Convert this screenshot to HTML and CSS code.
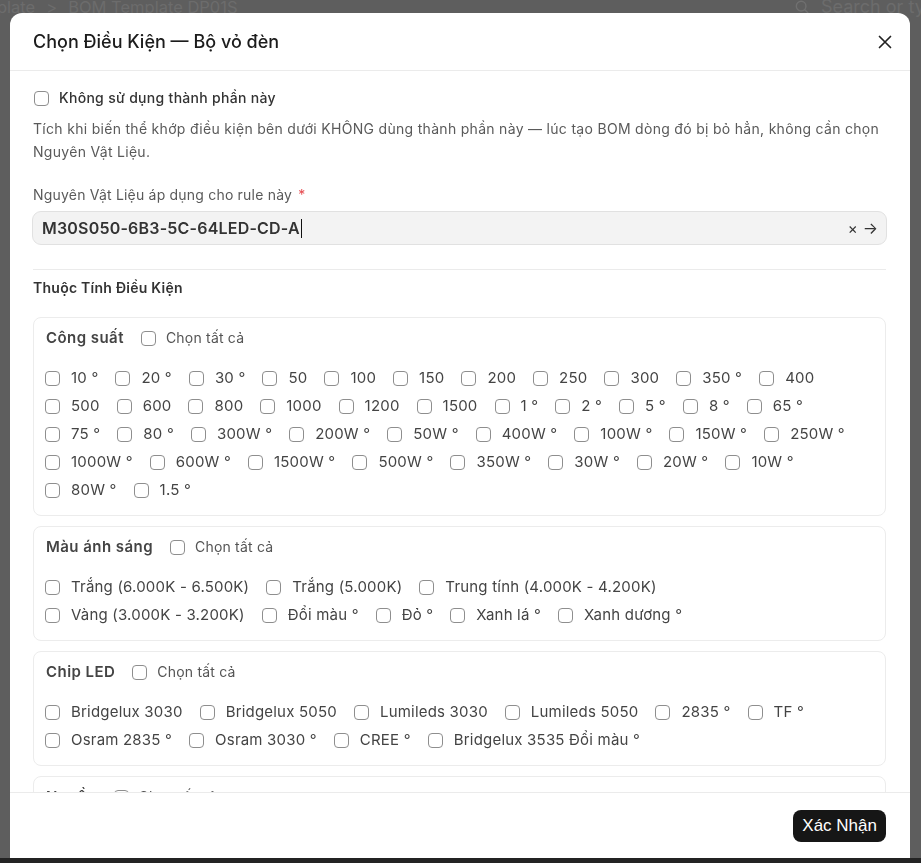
FILE: index.html
```html
<!DOCTYPE html>
<html lang="vi">
<head>
<meta charset="utf-8">
<title>Chọn Điều Kiện</title>
<link rel="stylesheet" href="styles.css">
</head>
<body>
<div class="page">
  <div class="topbar">
    <div class="crumbs"><span>plate</span><span class="sep">&gt;</span><span>BOM Template DP01S</span></div>
    <div class="search">
      <svg width="14" height="14" viewBox="0 0 16 16"><circle cx="7" cy="7" r="5.5" fill="none" stroke="#707070" stroke-width="1.6"/><path d="M11.2 11.2l3.5 3.5" stroke="#707070" stroke-width="1.6" stroke-linecap="round"/></svg>
      <span>Search or type</span>
    </div>
  </div>
</div>

<div class="modal">
  <div class="modal-header">
    <h2 class="modal-title">Chọn Điều Kiện — Bộ vỏ đèn</h2>
    <button class="close-btn" aria-label="Đóng">
      <svg width="16" height="16" viewBox="0 0 16 16"><path d="M2.5 2.5l11 11M13.5 2.5l-11 11" stroke="#222" stroke-width="1.7" stroke-linecap="round"/></svg>
    </button>
  </div>

  <div class="modal-body">
    <label class="check skip"><input type="checkbox"><span>Không sử dụng thành phần này</span></label>
    <p class="desc">Tích khi biến thể khớp điều kiện bên dưới KHÔNG dùng thành phần này — lúc tạo BOM dòng đó bị bỏ hẳn, không cần chọn Nguyên Vật Liệu.</p>

    <div class="field-label">Nguyên Vật Liệu áp dụng cho rule này <span class="req">*</span></div>
    <div class="input">
      <span class="input-value">M30S050-6B3-5C-64LED-CD-A</span><span class="caret"></span>
      <span class="input-actions"><span class="clear">×</span><span class="go">→</span></span>
    </div>

    <div class="divider"></div>
    <div class="section-title">Thuộc Tính Điều Kiện</div>

    <div class="groups">
      <div class="group">
        <div class="group-head">
          <span class="group-title">Công suất</span>
          <label class="check all"><input type="checkbox"><span>Chọn tất cả</span></label>
        </div>
        <div class="items">
          <label class="check item"><input type="checkbox"><span>10 °</span></label>
          <label class="check item"><input type="checkbox"><span>20 °</span></label>
          <label class="check item"><input type="checkbox"><span>30 °</span></label>
          <label class="check item"><input type="checkbox"><span>50</span></label>
          <label class="check item"><input type="checkbox"><span>100</span></label>
          <label class="check item"><input type="checkbox"><span>150</span></label>
          <label class="check item"><input type="checkbox"><span>200</span></label>
          <label class="check item"><input type="checkbox"><span>250</span></label>
          <label class="check item"><input type="checkbox"><span>300</span></label>
          <label class="check item"><input type="checkbox"><span>350 °</span></label>
          <label class="check item"><input type="checkbox"><span>400</span></label>
          <label class="check item"><input type="checkbox"><span>500</span></label>
          <label class="check item"><input type="checkbox"><span>600</span></label>
          <label class="check item"><input type="checkbox"><span>800</span></label>
          <label class="check item"><input type="checkbox"><span>1000</span></label>
          <label class="check item"><input type="checkbox"><span>1200</span></label>
          <label class="check item"><input type="checkbox"><span>1500</span></label>
          <label class="check item"><input type="checkbox"><span>1 °</span></label>
          <label class="check item"><input type="checkbox"><span>2 °</span></label>
          <label class="check item"><input type="checkbox"><span>5 °</span></label>
          <label class="check item"><input type="checkbox"><span>8 °</span></label>
          <label class="check item"><input type="checkbox"><span>65 °</span></label>
          <label class="check item"><input type="checkbox"><span>75 °</span></label>
          <label class="check item"><input type="checkbox"><span>80 °</span></label>
          <label class="check item"><input type="checkbox"><span>300W °</span></label>
          <label class="check item"><input type="checkbox"><span>200W °</span></label>
          <label class="check item"><input type="checkbox"><span>50W °</span></label>
          <label class="check item"><input type="checkbox"><span>400W °</span></label>
          <label class="check item"><input type="checkbox"><span>100W °</span></label>
          <label class="check item"><input type="checkbox"><span>150W °</span></label>
          <label class="check item"><input type="checkbox"><span>250W °</span></label>
          <label class="check item"><input type="checkbox"><span>1000W °</span></label>
          <label class="check item"><input type="checkbox"><span>600W °</span></label>
          <label class="check item"><input type="checkbox"><span>1500W °</span></label>
          <label class="check item"><input type="checkbox"><span>500W °</span></label>
          <label class="check item"><input type="checkbox"><span>350W °</span></label>
          <label class="check item"><input type="checkbox"><span>30W °</span></label>
          <label class="check item"><input type="checkbox"><span>20W °</span></label>
          <label class="check item"><input type="checkbox"><span>10W °</span></label>
          <label class="check item"><input type="checkbox"><span>80W °</span></label>
          <label class="check item"><input type="checkbox"><span>1.5 °</span></label>
        </div>
      </div>

      <div class="group">
        <div class="group-head">
          <span class="group-title">Màu ánh sáng</span>
          <label class="check all"><input type="checkbox"><span>Chọn tất cả</span></label>
        </div>
        <div class="items">
          <label class="check item"><input type="checkbox"><span>Trắng (6.000K - 6.500K)</span></label>
          <label class="check item"><input type="checkbox"><span>Trắng (5.000K)</span></label>
          <label class="check item"><input type="checkbox"><span>Trung tính (4.000K - 4.200K)</span></label>
          <label class="check item"><input type="checkbox"><span>Vàng (3.000K - 3.200K)</span></label>
          <label class="check item"><input type="checkbox"><span>Đổi màu °</span></label>
          <label class="check item"><input type="checkbox"><span>Đỏ °</span></label>
          <label class="check item"><input type="checkbox"><span>Xanh lá °</span></label>
          <label class="check item"><input type="checkbox"><span>Xanh dương °</span></label>
        </div>
      </div>

      <div class="group">
        <div class="group-head">
          <span class="group-title">Chip LED</span>
          <label class="check all"><input type="checkbox"><span>Chọn tất cả</span></label>
        </div>
        <div class="items">
          <label class="check item"><input type="checkbox"><span>Bridgelux 3030</span></label>
          <label class="check item"><input type="checkbox"><span>Bridgelux 5050</span></label>
          <label class="check item"><input type="checkbox"><span>Lumileds 3030</span></label>
          <label class="check item"><input type="checkbox"><span>Lumileds 5050</span></label>
          <label class="check item"><input type="checkbox"><span>2835 °</span></label>
          <label class="check item"><input type="checkbox"><span>TF °</span></label>
          <label class="check item"><input type="checkbox"><span>Osram 2835 °</span></label>
          <label class="check item"><input type="checkbox"><span>Osram 3030 °</span></label>
          <label class="check item"><input type="checkbox"><span>CREE °</span></label>
          <label class="check item"><input type="checkbox"><span>Bridgelux 3535 Đổi màu °</span></label>
        </div>
      </div>

      <div class="group">
        <div class="group-head">
          <span class="group-title">Nguồn</span>
          <label class="check all"><input type="checkbox"><span>Chọn tất cả</span></label>
        </div>
        <div class="items">
          <label class="check item"><input type="checkbox"><span>Meanwell</span></label>
          <label class="check item"><input type="checkbox"><span>Done</span></label>
          <label class="check item"><input type="checkbox"><span>Inventronics</span></label>
        </div>
      </div>
    </div>
  </div>

  <div class="modal-footer">
    <button class="confirm">Xác Nhận</button>
  </div>
</div>
<div class="bottom-strip"></div>
</body>
</html>
```

FILE: styles.css
```css
* { box-sizing: border-box; }

html, body {
  margin: 0;
  width: 921px;
  height: 863px;
  overflow: hidden;
}

body {
  background: #5e5e5e;
  font-family: Inter, "Noto Sans", "Liberation Sans", sans-serif;
  color: #333;
}

/* background page behind the dialog */
.page {
  height: 100%;
  color: #6c6c6c;
}
.topbar {
  display: flex;
  justify-content: space-between;
  align-items: center;
  height: 22px;
  margin-top: -4px;
  font-size: 16.5px;
  line-height: 22px;
}
.crumbs {
  display: flex;
  gap: 11px;
  margin-left: -3px;
}
.search {
  display: flex;
  align-items: center;
  gap: 12px;
  width: 126px;
  white-space: nowrap;
  overflow: hidden;
  font-size: 18px;
}
.search svg { flex: none; }

/* dialog */
.modal {
  position: fixed;
  left: 10px;
  top: 13px;
  width: 900px;
  height: 845px;
  background: #fff;
  border-radius: 12px 12px 0 0;
  display: flex;
  flex-direction: column;
  overflow: hidden;
}

.modal-header {
  flex: none;
  height: 58px;
  display: flex;
  align-items: center;
  justify-content: space-between;
  padding: 0 17px 0 23px;
  border-bottom: 1px solid #ebebeb;
}
.modal-title {
  margin: 0;
  font-size: 18px;
  font-weight: 500;
  color: #1c1c1c;
}
.close-btn {
  border: none;
  background: none;
  padding: 0;
  width: 16px;
  height: 16px;
  display: flex;
}

.modal-body {
  flex: 1;
  overflow: hidden;
  padding: 17px 24px 0 23px;
}

.check {
  display: flex;
  align-items: center;
  gap: 10px;
}
.check input {
  appearance: none;
  -webkit-appearance: none;
  margin: 0;
  flex: none;
  width: 15px;
  height: 15px;
  border: 1px solid #8e8e8e;
  border-radius: 4px;
  background: #fff;
}

.skip {
  font-size: 14px;
  font-weight: 500;
  line-height: 20px;
  letter-spacing: 0.3px;
  color: #333;
}
.skip input { margin-left: 1px; }

.desc {
  margin: 9px 0 0;
  font-size: 14px;
  line-height: 23px;
  letter-spacing: 0.3px;
  color: #5a5a5a;
}

.field-label {
  margin-top: 22px;
  font-size: 14px;
  line-height: 20px;
  letter-spacing: 0.2px;
  color: #5a5a5a;
}
.req { color: #e5484d; margin-left: 2px; }

.input {
  margin: 6px -1px 0;
  height: 34px;
  display: flex;
  align-items: center;
  padding: 0 8px 0 9px;
  background: #f3f3f3;
  border: 1px solid #e1e1e1;
  border-radius: 9px;
}
.input-value {
  font-size: 16px;
  font-weight: 600;
  color: #333;
  letter-spacing: 0.2px;
}
.caret {
  width: 1.5px;
  height: 19px;
  background: #111;
  margin-left: 1px;
}
.input-actions {
  margin-left: auto;
  display: flex;
  align-items: center;
  gap: 5px;
  color: #333;
}
.clear { font-size: 15px; }
.go { font-size: 16px; }

.divider {
  margin-top: 24px;
  height: 1px;
  background: #ebebeb;
}

.section-title {
  margin-top: 8px;
  font-size: 14px;
  font-weight: 600;
  line-height: 20px;
  letter-spacing: 0.25px;
  color: #333;
}

.groups {
  margin-top: 19px;
  display: flex;
  flex-direction: column;
  gap: 10px;
}

.group {
  border: 1px solid #ececec;
  border-radius: 8px;
  padding: 10px 22px 15px 11px;
}
.group-head {
  display: flex;
  align-items: center;
  gap: 17px;
  line-height: 20px;
}
.group-title {
  font-size: 15px;
  font-weight: 600;
  letter-spacing: 0.45px;
  color: #444;
  margin-left: 1px;
}
.all {
  font-size: 14px;
  letter-spacing: 0.2px;
  color: #555;
}

.items {
  margin-top: 20px;
  display: flex;
  flex-wrap: wrap;
  column-gap: 17px;
  row-gap: 8px;
}
.item {
  gap: 11px;
  font-size: 15px;
  line-height: 20px;
  letter-spacing: 0.2px;
  color: #444;
}

.modal-footer {
  flex: none;
  height: 66px;
  border-top: 1px solid #ebebeb;
  display: flex;
  justify-content: flex-end;
  align-items: flex-start;
  padding: 17px 24px 0;
}
.confirm {
  height: 32px;
  padding: 0 9px;
  border: none;
  border-radius: 8px;
  background: #161616;
  color: #fff;
  font-family: "Liberation Sans", Arial, sans-serif;
  font-size: 17px;
}

.bottom-strip {
  position: fixed;
  left: 0;
  right: 0;
  bottom: 0;
  height: 5px;
  background: #232323;
}
```
